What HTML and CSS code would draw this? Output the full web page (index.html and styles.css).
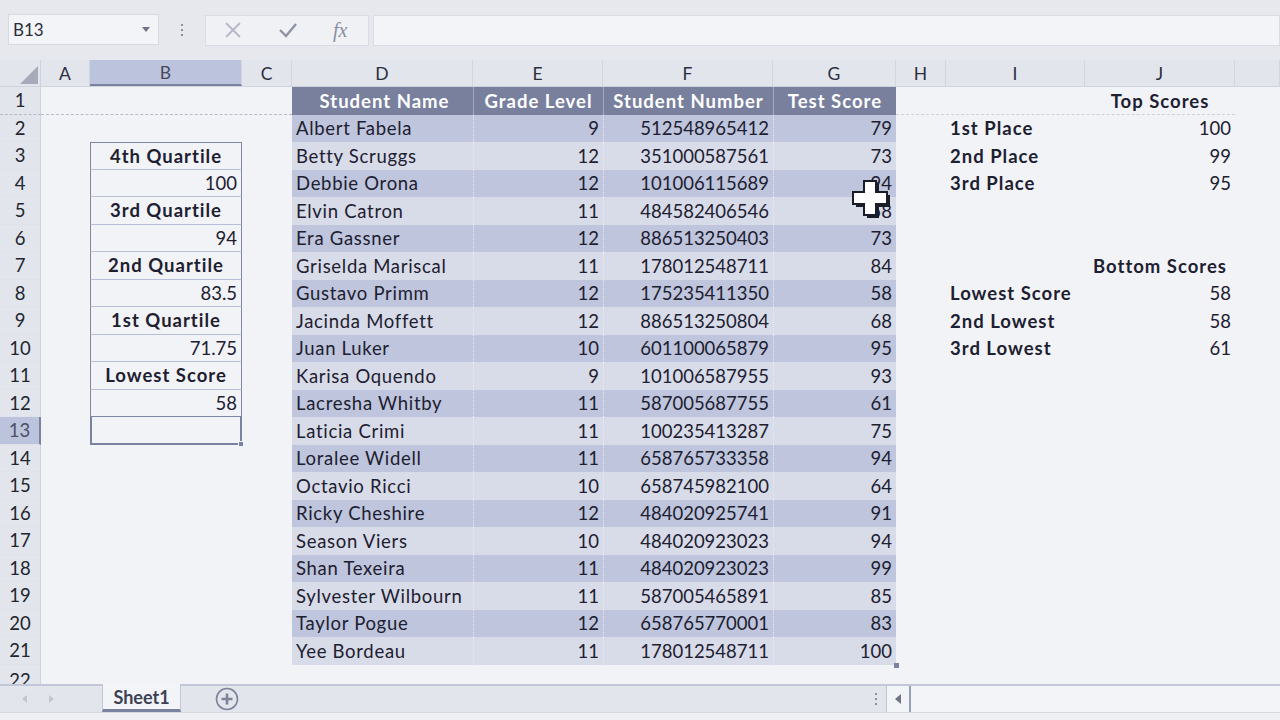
FILE: index.html
```html
<!DOCTYPE html>
<html>
<head>
<meta charset="utf-8">
<link rel="stylesheet" href="styles.css">
</head>
<body>
<div class="app">
  <div class="fbar">
    <div class="namebox"><span>B13</span><span class="dd"></span></div>
    <div class="vdots"><i></i><i></i><i></i></div>
    <div class="fbtns">
      <svg width="20" height="20" viewBox="0 0 20 20"><path d="M3 3L17 17M17 3L3 17" stroke="#b4b8c6" stroke-width="1.8"/></svg>
      <svg width="22" height="20" viewBox="0 0 22 20"><path d="M3 10L9 16L19 4" stroke="#8e93a6" stroke-width="2.4" fill="none"/></svg>
      <span class="fx">fx</span>
    </div>
    <div class="finput"></div>
  </div>

  <div class="sheet">
    <div class="colhdr">
      <div class="corner"><svg width="20" height="20" viewBox="0 0 20 20"><path d="M20 2L20 20L2 20Z" fill="#a7abb9"/></svg></div>
      <div class="ch">A</div><div class="ch sel">B</div><div class="ch">C</div><div class="ch">D</div><div class="ch">E</div><div class="ch">F</div><div class="ch">G</div><div class="ch">H</div><div class="ch">I</div><div class="ch">J</div><div class="ch"></div>
    </div>

    <div class="row r1"><div class="rh pbh">1</div><div class="pb pbl"></div><div class="th cd">Student Name</div><div class="th ce">Grade Level</div><div class="th cf">Student Number</div><div class="th cg">Test Score</div><div class="pb pbr"></div><div class="hj bold ctr">Top Scores</div></div>
    <div class="row dk"><div class="rh">2</div><div class="td cd">Albert Fabela</div><div class="td ce num">9</div><div class="td cf num">512548965412</div><div class="td cg num">79</div><div class="ci bold">1st Place</div><div class="cj num">100</div></div>
    <div class="row lt"><div class="rh">3</div><div class="cb bold ctr box top">4th Quartile</div><div class="td cd">Betty Scruggs</div><div class="td ce num">12</div><div class="td cf num">351000587561</div><div class="td cg num">73</div><div class="ci bold">2nd Place</div><div class="cj num">99</div></div>
    <div class="row dk"><div class="rh">4</div><div class="cb num box">100</div><div class="td cd">Debbie Orona</div><div class="td ce num">12</div><div class="td cf num">101006115689</div><div class="td cg num">94</div><div class="ci bold">3rd Place</div><div class="cj num">95</div></div>
    <div class="row lt"><div class="rh">5</div><div class="cb bold ctr box">3rd Quartile</div><div class="td cd">Elvin Catron</div><div class="td ce num">11</div><div class="td cf num">484582406546</div><div class="td cg num">58</div></div>
    <div class="row dk"><div class="rh">6</div><div class="cb num box">94</div><div class="td cd">Era Gassner</div><div class="td ce num">12</div><div class="td cf num">886513250403</div><div class="td cg num">73</div></div>
    <div class="row lt"><div class="rh">7</div><div class="cb bold ctr box">2nd Quartile</div><div class="td cd">Griselda Mariscal</div><div class="td ce num">11</div><div class="td cf num">178012548711</div><div class="td cg num">84</div><div class="hj bold ctr">Bottom Scores</div></div>
    <div class="row dk"><div class="rh">8</div><div class="cb num box">83.5</div><div class="td cd">Gustavo Primm</div><div class="td ce num">12</div><div class="td cf num">175235411350</div><div class="td cg num">58</div><div class="ci bold">Lowest Score</div><div class="cj num">58</div></div>
    <div class="row lt"><div class="rh">9</div><div class="cb bold ctr box">1st Quartile</div><div class="td cd">Jacinda Moffett</div><div class="td ce num">12</div><div class="td cf num">886513250804</div><div class="td cg num">68</div><div class="ci bold">2nd Lowest</div><div class="cj num">58</div></div>
    <div class="row dk"><div class="rh">10</div><div class="cb num box">71.75</div><div class="td cd">Juan Luker</div><div class="td ce num">10</div><div class="td cf num">601100065879</div><div class="td cg num">95</div><div class="ci bold">3rd Lowest</div><div class="cj num">61</div></div>
    <div class="row lt"><div class="rh">11</div><div class="cb bold ctr box">Lowest Score</div><div class="td cd">Karisa Oquendo</div><div class="td ce num">9</div><div class="td cf num">101006587955</div><div class="td cg num">93</div></div>
    <div class="row dk"><div class="rh">12</div><div class="cb num box bot">58</div><div class="td cd">Lacresha Whitby</div><div class="td ce num">11</div><div class="td cf num">587005687755</div><div class="td cg num">61</div></div>
    <div class="row lt"><div class="rh rsel">13</div><div class="cb active"><span class="handle"></span></div><div class="td cd">Laticia Crimi</div><div class="td ce num">11</div><div class="td cf num">100235413287</div><div class="td cg num">75</div></div>
    <div class="row dk"><div class="rh">14</div><div class="td cd">Loralee Widell</div><div class="td ce num">11</div><div class="td cf num">658765733358</div><div class="td cg num">94</div></div>
    <div class="row lt"><div class="rh">15</div><div class="td cd">Octavio Ricci</div><div class="td ce num">10</div><div class="td cf num">658745982100</div><div class="td cg num">64</div></div>
    <div class="row dk"><div class="rh">16</div><div class="td cd">Ricky Cheshire</div><div class="td ce num">12</div><div class="td cf num">484020925741</div><div class="td cg num">91</div></div>
    <div class="row lt"><div class="rh">17</div><div class="td cd">Season Viers</div><div class="td ce num">10</div><div class="td cf num">484020923023</div><div class="td cg num">94</div></div>
    <div class="row dk"><div class="rh">18</div><div class="td cd">Shan Texeira</div><div class="td ce num">11</div><div class="td cf num">484020923023</div><div class="td cg num">99</div></div>
    <div class="row lt"><div class="rh">19</div><div class="td cd">Sylvester Wilbourn</div><div class="td ce num">11</div><div class="td cf num">587005465891</div><div class="td cg num">85</div></div>
    <div class="row dk"><div class="rh">20</div><div class="td cd">Taylor Pogue</div><div class="td ce num">12</div><div class="td cf num">658765770001</div><div class="td cg num">83</div></div>
    <div class="row lt"><div class="rh">21</div><div class="td cd">Yee Bordeau</div><div class="td ce num">11</div><div class="td cf num">178012548711</div><div class="td cg num last">100<span class="thandle"></span></div></div>
    <div class="row r22"><div class="rh">22</div></div>

    <svg class="cursor" width="44" height="44" viewBox="0 0 44 44">
      <path d="M15 5H27V16H38V28H27V39H15V28H4V16H15Z" fill="#1a1d28" transform="translate(3 3)"/>
      <path d="M15 5H27V16H38V28H27V39H15V28H4V16H15Z" fill="#ffffff" stroke="#1a1d28" stroke-width="2"/>
    </svg>
  </div>

  <div class="tabbar">
    <div class="navs"><span class="arr l"></span><span class="arr r"></span></div>
    <div class="tab">Sheet1</div>
    <div class="plus"><svg width="24" height="24" viewBox="0 0 24 24"><circle cx="12" cy="12" r="10.5" fill="none" stroke="#7d8399" stroke-width="1.6"/><path d="M12 6.5V17.5M6.5 12H17.5" stroke="#7d8399" stroke-width="2.6"/></svg></div>
    <div class="spacer"></div>
    <div class="vdots small"><i></i><i></i><i></i></div>
    <div class="hscroll"><div class="sbtn"><svg width="10" height="12" viewBox="0 0 10 12"><path d="M8 1L2 6L8 11Z" fill="#6e7488"/></svg></div><div class="strack"></div></div>
  </div>
  <div class="status"></div>
</div>
</body>
</html>
```
FILE: styles.css
```css
* { box-sizing: border-box; margin: 0; padding: 0; }
html, body { width: 1280px; height: 720px; overflow: hidden; background: #f2f3f7; }
body { font-family: Lato, "Open Sans", sans-serif; color: #1d2030; }
.app { width: 1280px; height: 720px; display: flex; flex-direction: column; }

.fbar { height: 60px; background: #e6e8ee; display: flex; align-items: center; padding: 0 0 0 8px; }
.namebox { width: 151px; height: 31px; background: #f3f4f8; border: 1px solid #d7dae3; display: flex; align-items: center; justify-content: space-between; padding: 0 8px 0 4px; font-size: 17px; color: #2a2d3a; margin-top: -1px; }
.dd { width: 0; height: 0; border-left: 4px solid transparent; border-right: 4px solid transparent; border-top: 5px solid #6f7487; }
.vdots { width: 46px; display: flex; flex-direction: column; align-items: center; gap: 3px; }
.vdots i { width: 2px; height: 2px; background: #8a8fa2; display: block; }
.fbtns { width: 164px; height: 31px; background: #f0f1f5; border: 1px solid #d9dce4; display: flex; align-items: center; gap: 34px; padding-left: 17px; }
.fx { font-family: "Liberation Serif", serif; font-style: italic; font-size: 20px; color: #8a8fa2; }
.finput { flex: 1; height: 31px; background: #f3f4f8; border: 1px solid #d9dce4; margin-left: 4px; }

.sheet { position: relative; height: 624px; overflow: hidden; }
.colhdr, .row { display: grid; grid-template-columns: 41px 49px 152px 50px 181px 130px 170px 123px 50px 139px 150px 45px; }
.colhdr { height: 27px; background: #e3e5ec; border-bottom: 1px solid #cfd3de; }
.corner { display: flex; align-items: flex-end; justify-content: flex-end; padding: 0 2px 2px 0; border-right: 1px solid #cfd3de; }
.ch { display: flex; align-items: center; justify-content: center; font-size: 17.5px; color: #2c2f3d; border-right: 1px solid #d3d6e0; }
.ch.sel { background: #bcc3dc; border-bottom: 2px solid #7a829f; color: #454a5e; }

.row { height: 27.5px; font-size: 18.5px; }
.row > div { display: flex; align-items: center; white-space: nowrap; grid-row: 1; }
.rh { grid-column: 1; justify-content: center; background: #e3e5ec; border-right: 1px solid #cfd3de; border-bottom: 1px solid #dfe2ea; font-size: 18.5px; color: #22252f; }
.rh.pbh { border-bottom: 1px dashed #b4b9cb; }
.rh.rsel { background: #bcc3dc; border-right: 2px solid #7a829f; color: #4d5266; }

.pb { border-bottom: 1px dashed #b4b9cb; height: 27.5px; }
.pbl { grid-column: 2 / 5; }
.pbr { grid-column: 9 / 12; border-bottom-color: #cdd1de; }

.th { background: #78809e; color: #ffffff; font-weight: 700; justify-content: center; border-left: 1px solid #a2a9c1; }
.th.cd { border-left: none; }
.cd { grid-column: 5; padding-left: 4px; }
.td.cd { letter-spacing: 0.7px; }
.ce { grid-column: 6; }
.cf { grid-column: 7; }
.cg { grid-column: 8; }
.cb { grid-column: 3; }
.ci { grid-column: 10; padding-left: 4px; }
.cj { grid-column: 11; }
.hj { grid-column: 11; justify-content: center; }

.num { justify-content: flex-end; padding-right: 4px; }
.ctr { justify-content: center; }
.bold, .th { font-weight: 700; letter-spacing: 1px; }

.dk .td { background: #bec5dc; }
.lt .td { background: #d8dbe8; }
.td.ce, .td.cf, .td.cg { border-left: 1px dotted #e6e9f2; }

.box { border-left: 1px solid #7e86a1; border-right: 1px solid #7e86a1; border-bottom: 1px solid #b7bed6; }
.box.top { border-top: 1px solid #7e86a1; }
.box.bot { border-bottom: 1px solid #7e86a1; }
.active { border: 2px solid #7a829f; border-top: none; position: relative; }
.handle { position: absolute; right: -4px; bottom: -4px; width: 6px; height: 6px; background: #7a829f; border: 1px solid #f2f3f7; }
.last { position: relative; }
.thandle { position: absolute; right: -3px; bottom: -3px; width: 5px; height: 5px; background: #7a829f; }

.r22 { height: 32px; }

.cursor { position: absolute; left: 849px; top: 116px; }

.tabbar { height: 28px; background: #e3e5ec; border-top: 2px solid #c3c8d8; display: flex; align-items: stretch; }
.navs { width: 102px; display: flex; align-items: center; gap: 22px; padding-left: 22px; }
.arr { width: 0; height: 0; border-top: 4px solid transparent; border-bottom: 4px solid transparent; }
.arr.l { border-right: 5px solid #c2c6d2; }
.arr.r { border-left: 5px solid #c2c6d2; }
.tab { width: 79px; margin-top: -2px; background: #f3f4f8; border: 1px solid #c3c8d8; border-top: none; border-bottom: 3px solid #7a829f; display: flex; align-items: center; justify-content: center; font-weight: 700; font-size: 18px; color: #3d4153; }
.plus { width: 92px; display: flex; align-items: center; justify-content: center; }
.spacer { flex: 1; }
.vdots.small { width: 20px; justify-content: center; }
.hscroll { width: 394px; display: flex; align-items: stretch; border-left: 1px solid #c3c8d8; background: #f3f4f8; }
.sbtn { width: 24px; display: flex; align-items: center; justify-content: center; border-right: 2px solid #9aa0b5; }
.strack { flex: 1; }
.status { height: 8px; background: #eef0f4; border-top: 1px solid #d6d9e2; }
```
